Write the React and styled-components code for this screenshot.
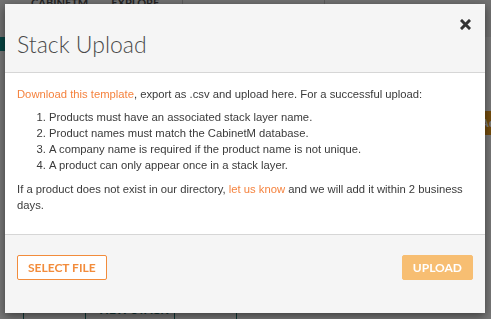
import React from "react";
import styled, { createGlobalStyle } from "styled-components";

const GlobalStyle = createGlobalStyle`
  html, body {
    margin: 0;
    padding: 0;
    width: 491px;
    height: 319px;
    overflow: hidden;
    font-family: "Liberation Sans", Arial, sans-serif;
  }
`;

// page behind the modal
const Page = styled.div`
  width: 491px;
  height: 319px;
  background: #f0f0f0;
  display: flex;
  flex-direction: column;
`;

const NavBar = styled.div`
  height: 37px;
  background: #e2e2e2;
  display: flex;
  align-items: flex-start;
  padding-left: 31px;
  font-family: Lato, "Liberation Sans", sans-serif;
  font-weight: 700;
  font-size: 11px;
  color: #4a4a4a;
`;

const NavItem = styled.span`
  margin-right: 23px;
  line-height: 10px;
  margin-top: -2px;
`;

const NavDivider = styled.div`
  width: 1px;
  height: 12px;
  background: #b8b8b8;
  margin-left: ${(p) => p.$offset}px;
`;

const Hero = styled.div`
  height: 14px;
  display: flex;
`;

const HeroBlock = styled.div`
  width: 80px;
  background: #0f8a86;
`;

const Content = styled.div`
  flex: 1;
  display: flex;
  flex-direction: column;
  justify-content: space-between;
`;

const Toolbar = styled.div`
  display: flex;
  justify-content: flex-end;
  margin-top: 60px;
`;

const AddButton = styled.div`
  width: 10px;
  height: 24px;
  background: #e89a1a;
  color: #fff;
  font-size: 11px;
  font-weight: 700;
  line-height: 24px;
  overflow: hidden;
`;

const Table = styled.div`
  display: flex;
  padding-left: 23px;
`;

const Cell = styled.div`
  width: ${(p) => p.$w}px;
  height: 14px;
  border-left: 1px solid #1b6e6a;
  font-family: Lato, "Liberation Sans", sans-serif;
  font-weight: 700;
  font-size: 12px;
  color: #1b5e5a;
  padding-left: 11px;
  box-sizing: border-box;
  line-height: 10px;
`;

const Backdrop = styled.div`
  position: fixed;
  inset: 0;
  background: rgba(0, 0, 0, 0.5);
  padding: 4px 6px 0 5px;
`;

const Modal = styled.div`
  width: 480px;
  background: #fff;
  box-shadow: 0 3px 9px rgba(0, 0, 0, 0.5);
  display: flex;
  flex-direction: column;
`;

const Header = styled.div`
  position: relative;
  height: 69px;
  background: #f5f5f5;
  border-bottom: 1px solid #d6d6d6;
  padding: 0 12px;
  box-sizing: border-box;
`;

const Title = styled.h2`
  margin: 0;
  padding-top: 27px;
  font-family: Lato, "Liberation Sans", sans-serif;
  font-weight: 300;
  font-size: 23px;
  line-height: 26px;
  color: #4a4a4a;
`;

const Close = styled.button`
  position: absolute;
  top: 14px;
  right: 14px;
  border: 0;
  background: none;
  padding: 0;
  width: 11px;
  height: 11px;
  cursor: pointer;
`;

const Body = styled.div`
  padding: 13px 12px 21px;
  font-size: 11.25px;
  line-height: 16px;
  color: #3a3a3a;
`;

const Para = styled.p`
  margin: 0;
`;

const Link = styled.a`
  color: #f5833f;
  text-decoration: none;
`;

const Rules = styled.ol`
  margin: 7px 0 8px;
  padding-left: 32px;
`;

const Footer = styled.div`
  background: #f5f5f5;
  border-top: 1px solid #d6d6d6;
  height: 79px;
  box-sizing: border-box;
  padding: 20px 12px 0;
  display: flex;
  justify-content: space-between;
  align-items: flex-start;
`;

const Button = styled.button`
  height: 25px;
  padding: 0 10px;
  border-radius: 2px;
  font-family: Lato, "Liberation Sans", sans-serif;
  font-weight: 700;
  font-size: 12px;
  text-transform: uppercase;
  cursor: pointer;
  border: 1px solid ${(p) => (p.$primary ? "#f7be72" : "#f28c3c")};
  background: ${(p) => (p.$primary ? "#f7be72" : "#fff")};
  color: ${(p) => (p.$primary ? "#fff" : "#f28c3c")};
`;

const CloseIcon = () => (
  <svg width="11" height="11" viewBox="0 0 11 11">
    <path d="M2 2 L9 9 M9 2 L2 9" stroke="#333" strokeWidth="3" strokeLinecap="square" />
  </svg>
);

export default function App() {
  return (
    <>
      <GlobalStyle />
      <Page>
        <NavBar>
          <NavItem>CABINETM</NavItem>
          <NavItem>EXPLORE</NavItem>
          <NavDivider $offset={0} />
          <NavDivider $offset={141} />
        </NavBar>
        <Hero>
          <HeroBlock />
        </Hero>
        <Content>
          <Toolbar>
            <AddButton>Add</AddButton>
          </Toolbar>
          <Table>
            <Cell $w={62} />
            <Cell $w={89}>VIEW STACK</Cell>
            <Cell $w={62} />
            <Cell $w={62} />
          </Table>
        </Content>
      </Page>
      <Backdrop>
        <Modal>
          <Header>
            <Title>Stack Upload</Title>
            <Close aria-label="Close">
              <CloseIcon />
            </Close>
          </Header>
          <Body>
            <Para>
              <Link href="#">Download this template</Link>, export as .csv and upload here. For a
              successful upload:
            </Para>
            <Rules>
              <li>Products must have an associated stack layer name.</li>
              <li>Product names must match the CabinetM database.</li>
              <li>A company name is required if the product name is not unique.</li>
              <li>A product can only appear once in a stack layer.</li>
            </Rules>
            <Para>
              If a product does not exist in our directory, <Link href="#">let us know</Link> and
              we will add it within 2 business days.
            </Para>
          </Body>
          <Footer>
            <Button>Select File</Button>
            <Button $primary>Upload</Button>
          </Footer>
        </Modal>
      </Backdrop>
    </>
  );
}
